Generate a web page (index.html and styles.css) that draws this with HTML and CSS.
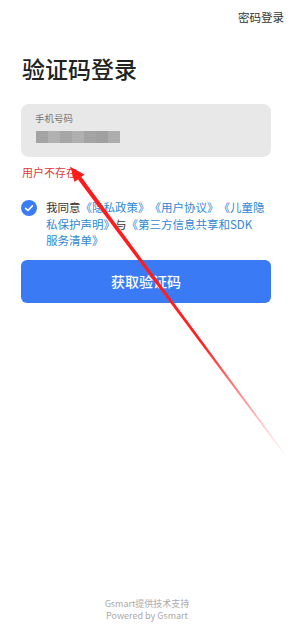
FILE: index.html
```html
<!DOCTYPE html>
<html lang="zh">
<head>
<meta charset="utf-8">
<link rel="stylesheet" href="styles.css">
</head>
<body>
<div class="page">
  <div class="topbar"><span class="pwd-login">密码登录</span></div>
  <h1 class="title">验证码登录</h1>
  <div class="field">
    <div class="field-label">手机号码</div>
    <div class="masked">
      <span class="px p1"></span><span class="px p2"></span><span class="px p3"></span><span class="px p4"></span><span class="px p5"></span><span class="px p6"></span><span class="px p7"></span>
    </div>
  </div>
  <div class="error">用户不存在</div>
  <div class="agree">
    <span class="check">
      <svg viewBox="0 0 16 16" width="16" height="16"><circle cx="8" cy="8" r="8" fill="#3b7cf5"/><path d="M4.6 8.3 L7 10.5 L11.4 5.9" fill="none" stroke="#fff" stroke-width="1.6" stroke-linecap="round" stroke-linejoin="round"/></svg>
    </span>
    <p class="agree-text">我同意<span class="link">《隐私政策》《用户协议》《儿童隐私保护声明》</span>与<span class="link">《第三方信息共享和SDK<span class="nowrap">服务清单》</span></span></p>
  </div>
  <button class="btn">获取验证码</button>
  <div class="footer">
    <div>Gsmart提供技术支持</div>
    <div>Powered by Gsmart</div>
  </div>
</div>
<svg class="annot" width="296" height="637" viewBox="0 0 296 637">
  <defs>
    <linearGradient id="fade" gradientUnits="userSpaceOnUse" x1="79" y1="178" x2="286" y2="456">
      <stop offset="0" stop-color="#ff1a1a" stop-opacity="1"/>
      <stop offset="0.6" stop-color="#ff2020" stop-opacity="1"/>
      <stop offset="1" stop-color="#ff4040" stop-opacity="0"/>
    </linearGradient>
  </defs>
  <polygon points="77.8,179.3 81.2,176.7 286,455 285,456" fill="url(#fade)"/>
  <polygon points="70.5,167 84.5,174.5 74.5,182" fill="#ff1a1a"/>
</svg>
</body>
</html>
```
FILE: styles.css
```css
* { box-sizing: border-box; }
html, body { margin: 0; padding: 0; background: #fff; }
body {
  font-family: "Noto Sans CJK SC", "Noto Sans", sans-serif;
  width: 296px;
  position: relative;
}
.page {
  min-height: 637px;
  display: flex;
  flex-direction: column;
  padding: 0 25px 0 21px;
}
.topbar {
  display: flex;
  justify-content: flex-end;
  padding-top: 9px;
  margin-right: -13px;
}
.pwd-login {
  font-size: 11.5px;
  line-height: 16px;
  color: #333;
}
.title {
  margin: 28px 0 0 1px;
  font-size: 23px;
  line-height: 30px;
  font-weight: 500;
  color: #222;
}
.field {
  margin-top: 21px;
  height: 53px;
  background: #e8e8e8;
  border-radius: 8px;
  padding: 7px 14px 0;
}
.field-label {
  font-size: 9.5px;
  line-height: 14px;
  color: #777;
}
.masked {
  display: flex;
  margin-top: 6px;
  margin-left: 1px;
  height: 12px;
}
.px { display: block; width: 12px; height: 12px; }
.p1 { background: #a4a4a4; }
.p2 { background: #b1b1b1; }
.p3 { background: #a6a6a6; }
.p4 { background: #b0b0b0; }
.p5 { background: #a4a4a4; }
.p6 { background: #a0a0a0; }
.p7 { background: #adadad; }
.error {
  margin-top: 7px;
  margin-left: 1px;
  font-size: 11px;
  line-height: 16px;
  color: #e0393e;
}
.agree {
  display: flex;
  align-items: flex-start;
  gap: 9px;
  margin-top: 20px;
}
.check { flex: none; width: 16px; height: 16px; margin-top: 0; }
.check svg { display: block; }
.agree-text {
  margin: 0;
  margin-top: -1px;
  font-size: 11.5px;
  line-height: 16.5px;
  color: #333;
  text-spacing-trim: space-all;
}
.link { color: #2f88d4; }
.nowrap { white-space: nowrap; }
.btn {
  margin-top: 11px;
  height: 43px;
  width: 100%;
  border: none;
  border-radius: 6px;
  background: #3a7bf5;
  color: #fff;
  font-family: inherit;
  font-size: 14px;
  font-weight: 500;
}
.footer {
  margin-top: auto;
  margin-bottom: 15px;
  text-align: center;
  font-size: 9px;
  line-height: 12px;
  color: #aaa;
  padding-left: 2px;
}
.annot {
  position: absolute;
  left: 0;
  top: 0;
  pointer-events: none;
}
```
